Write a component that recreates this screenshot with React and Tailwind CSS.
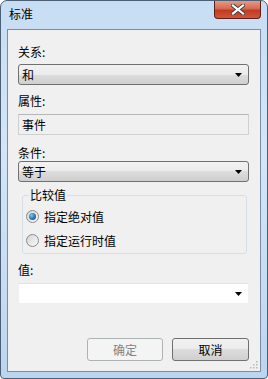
const FONT = { fontFamily: '"Noto Sans CJK SC", "Microsoft YaHei", sans-serif' };

function Arrow() {
  return (
    <svg width="7" height="4" viewBox="0 0 7 4" className="shrink-0">
      <path d="M0 0H7L3.5 4Z" fill="#000" />
    </svg>
  );
}

function Combo({ value }) {
  return (
    <div className="h-[21px] flex items-center justify-between pl-[3px] pr-[6px] rounded-[3px] border border-[#707070] bg-[linear-gradient(#f2f2f2_0%,#ebebeb_50%,#dddddd_50%,#cfcfcf_100%)] text-[12px] text-black leading-none">
      <span>{value}</span>
      <Arrow />
    </div>
  );
}

function Label({ children, className = "" }) {
  return <div className={`h-[14px] text-[12px] leading-[14px] text-black ${className}`}>{children}</div>;
}

function Radio({ checked, label, className = "" }) {
  return (
    <div className={`flex items-center gap-[5px] h-[13px] text-[12px] ${className}`}>
      <span className="w-[13px] h-[13px] rounded-full border border-[#8a8a8a] bg-[linear-gradient(135deg,#d4d4d4,#fafafa)] flex items-center justify-center">
        {checked && <span className="w-[7px] h-[7px] rounded-full bg-[radial-gradient(circle_at_35%_35%,#7cc4f0,#1f6fb0_60%,#154f83)]" />}
      </span>
      <span className="text-black leading-none">{label}</span>
    </div>
  );
}

export default function App() {
  return (
    <div className="w-[268px] h-[379px] bg-white" style={FONT}>
      <div className="w-[268px] h-[379px] flex flex-col rounded-t-[7px] rounded-b-[4px] border border-[#4d5f74] bg-[linear-gradient(180deg,#c7ddf3_0%,#d3e6f8_40%,#bcd5ef_100%)] overflow-hidden">
        <div className="h-[28px] flex items-start justify-between">
          <span className="pl-[8px] pt-[6px] text-[12px] leading-[14px] text-black">标准</span>
          <div className="mr-[6px] w-[47px] h-[18px] rounded-b-[4px] border border-t-0 border-[#5e1f18] bg-[linear-gradient(#e39a86_0%,#d56a52_45%,#c23a22_55%,#d0563a_100%)] flex items-center justify-center">
            <svg width="14" height="11" viewBox="0 0 14 11">
              <path d="M2 1.5L12 9.5M12 1.5L2 9.5" stroke="#404040" strokeWidth="4" strokeLinecap="square" />
              <path d="M2 1.5L12 9.5M12 1.5L2 9.5" stroke="#fff" strokeWidth="2.2" strokeLinecap="square" />
            </svg>
          </div>
        </div>
        <div className="mx-[6px] h-[343px] border border-[#7b8da3] bg-[#f0f0f0] flex flex-col pl-[10px] pr-[11px]">
          <Label className="mt-[15px]">关系:</Label>
          <div className="mt-[5px]"><Combo value="和" /></div>

          <Label className="mt-[9px]">属性:</Label>
          <div className="mt-[6px] h-[21px] flex items-center pl-[3px] text-[12px] leading-none border border-[#d0d0d0] border-t-[#b6b6b6] bg-[#f0f0f0] rounded-[1px]">事件</div>

          <Label className="mt-[11px]">条件:</Label>
          <div className="mt-[1px]"><Combo value="等于" /></div>

          <div className="mt-[13px] ml-[4px] w-[225px] h-[59px] relative rounded-[3px] border border-[#d5dfe5] flex flex-col pl-[3px]">
            <span className="absolute left-[6px] top-[-8px] px-[1px] bg-[#f0f0f0] text-[12px] leading-[14px] text-black">比较值</span>
            <Radio checked label="指定绝对值" className="mt-[14px]" />
            <Radio label="指定运行时值" className="mt-[11px]" />
          </div>

          <Label className="mt-[9px]">值:</Label>
          <div className="mt-[6px] h-[21px] flex items-center justify-end pr-[6px] bg-white border border-[#f0f0f0] border-t-[#e3e3e3]">
            <Arrow />
          </div>

          <div className="mt-[34px] flex justify-end gap-[9px]">
            <div className="w-[76px] h-[23px] rounded-[3px] border border-[#adb2b5] bg-[#f4f4f4] flex items-center justify-center text-[12px] text-[#838383]">确定</div>
            <div className="w-[77px] h-[23px] rounded-[3px] border border-[#707070] bg-[linear-gradient(#f2f2f2_0%,#ebebeb_50%,#dddddd_50%,#cfcfcf_100%)] flex items-center justify-center text-[12px] text-black">取消</div>
          </div>
          <div className="flex justify-end -mr-[9px] mt-[0px]">
            <svg width="8" height="8" viewBox="0 0 8 8">
              <g fill="#b8b8b8">
                <rect x="6" y="0" width="1.5" height="1.5" />
                <rect x="3" y="3" width="1.5" height="1.5" />
                <rect x="6" y="3" width="1.5" height="1.5" />
                <rect x="0" y="6" width="1.5" height="1.5" />
                <rect x="3" y="6" width="1.5" height="1.5" />
                <rect x="6" y="6" width="1.5" height="1.5" />
              </g>
            </svg>
          </div>
        </div>
      </div>
    </div>
  );
}
